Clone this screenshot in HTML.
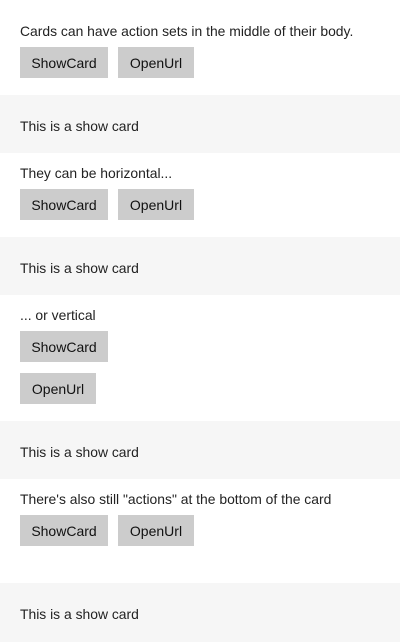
<!DOCTYPE html>
<html><head><style>
*{margin:0;padding:0;box-sizing:border-box}
body{width:400px;height:642px;background:#fff;font-family:"Liberation Sans",sans-serif;color:#222;position:relative;overflow:hidden}
.t{position:absolute;left:20px;font-size:13.9px;line-height:16px;white-space:nowrap}
.b{position:absolute;height:31px;background:#cccccc;font-size:14px;line-height:32px;text-align:center;color:#111}
.band{position:absolute;left:0;width:400px;height:58px;background:#f6f6f6}
</style></head><body>
<div class="t" style="top:23px">Cards can have action sets in the middle of their body.</div>
<div class="b" style="left:20px;top:47px;width:88px">ShowCard</div>
<div class="b" style="left:118px;top:47px;width:76px">OpenUrl</div>
<div class="band" style="top:95px"></div><div class="t" style="top:118px">This is a show card</div>

<div class="t" style="top:165px">They can be horizontal...</div>
<div class="b" style="left:20px;top:189px;width:88px">ShowCard</div>
<div class="b" style="left:118px;top:189px;width:76px">OpenUrl</div>
<div class="band" style="top:237px"></div><div class="t" style="top:260px">This is a show card</div>

<div class="t" style="top:307px">... or vertical</div>
<div class="b" style="left:20px;top:331px;width:88px">ShowCard</div>
<div class="b" style="left:20px;top:373px;width:76px">OpenUrl</div>
<div class="band" style="top:421px"></div><div class="t" style="top:444px">This is a show card</div>

<div class="t" style="top:491px">There's also still "actions" at the bottom of the card</div>
<div class="b" style="left:20px;top:515px;width:88px">ShowCard</div>
<div class="b" style="left:118px;top:515px;width:76px">OpenUrl</div>
<div class="band" style="top:583px;height:59px"></div><div class="t" style="top:606px">This is a show card</div>
</body></html>
